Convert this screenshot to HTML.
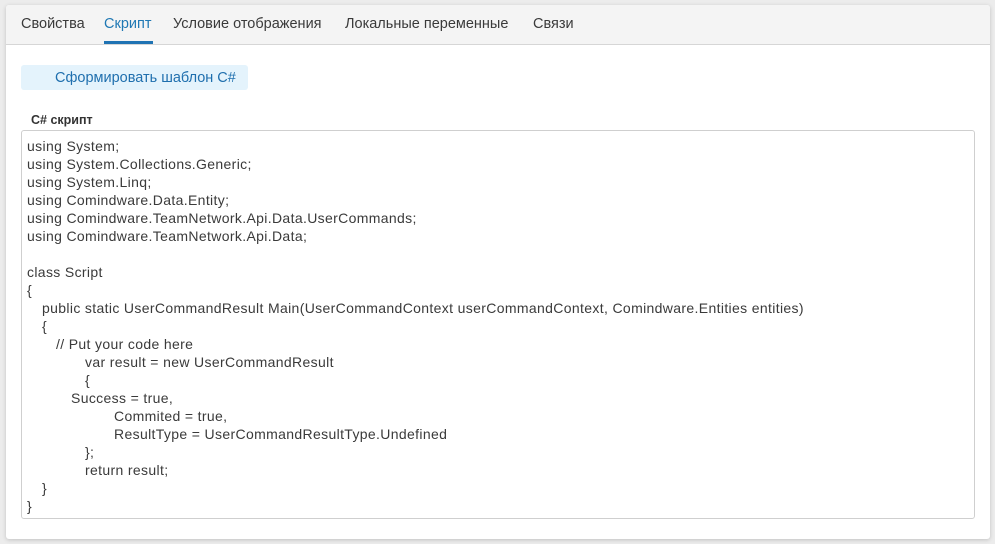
<!DOCTYPE html>
<html><head><meta charset="utf-8"><style>
body{margin:0;width:995px;height:544px;background:#ececec;font-family:"Liberation Sans",sans-serif;position:relative;overflow:hidden}
.panel{position:absolute;left:6px;top:5px;width:984px;height:534px;background:#fff;border-radius:3px;box-shadow:0 1px 4px rgba(0,0,0,.18)}
.head{position:absolute;left:0;top:0;width:984px;height:39px;background:#f4f4f4;border-bottom:1px solid #d6d6d6;border-radius:3px 3px 0 0}
.tab{position:absolute;top:11px;font-size:14.5px;color:#3a3a3a;white-space:nowrap}
.act{color:#1f78b4}
.ul{position:absolute;left:98px;top:36px;width:49px;height:3px;background:#1f73b3}
.btn{position:absolute;left:15px;top:60px;width:227px;height:25px;background:#e4f3fc;border-radius:3px;color:#1f6fae;font-size:14.5px;line-height:27px;text-indent:34px;white-space:nowrap}
.lbl{position:absolute;left:25px;top:108px;font-size:12.5px;font-weight:bold;color:#333}
.ta{position:absolute;left:15px;top:125px;width:952px;height:387px;border:1px solid #cfcfcf;border-radius:3px}
.c{position:absolute;font-size:14px;color:#3a3a3a;white-space:pre;letter-spacing:.35px;line-height:18px}
</style></head><body>
<div class="panel">
<div class="head">
<div class="tab" style="left:15px">Свойства</div>
<div class="tab act" style="left:98px">Скрипт</div>
<div class="tab" style="left:167px">Условие отображения</div>
<div class="tab" style="left:339px">Локальные переменные</div>
<div class="tab" style="left:527px">Связи</div>
<div class="ul"></div>
</div>
<div class="btn">Сформировать шаблон C#</div>
<div class="lbl">C# скрипт</div>
<div class="ta"></div>
</div>
<div class="c" style="left:27px;top:137px">using System;
using System.Collections.Generic;
using System.Linq;
using Comindware.Data.Entity;
using Comindware.TeamNetwork.Api.Data.UserCommands;
using Comindware.TeamNetwork.Api.Data;

class Script
{</div>
<div class="c" style="left:42px;top:299px">public static UserCommandResult Main(UserCommandContext userCommandContext, Comindware.Entities entities)
{</div>
<div class="c" style="left:56px;top:335px">// Put your code here</div>
<div class="c" style="left:85px;top:353px">var result = new UserCommandResult
{</div>
<div class="c" style="left:71px;top:389px">Success = true,</div>
<div class="c" style="left:114px;top:407px">Commited = true,
ResultType = UserCommandResultType.Undefined</div>
<div class="c" style="left:85px;top:443px">};
return result;</div>
<div class="c" style="left:42px;top:479px">}</div>
<div class="c" style="left:27px;top:497px">}</div>
</body></html>
